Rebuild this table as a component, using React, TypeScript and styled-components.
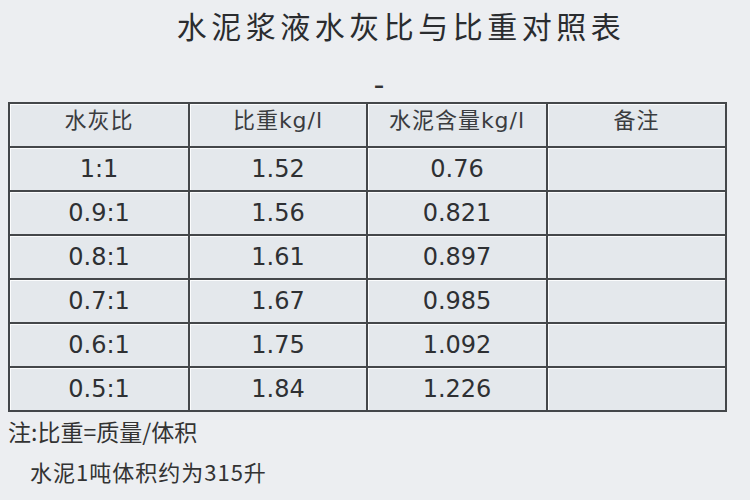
import styled, { createGlobalStyle } from 'styled-components';

const GlobalStyle = createGlobalStyle`
  body {
    margin: 0;
    background: #eceef1;
    font-family: "DejaVu Sans", "Noto Sans CJK SC", sans-serif;
    color: #2e3033;
  }
`;

const rows = [
  ['1:1', '1.52', '0.76'],
  ['0.9:1', '1.56', '0.821'],
  ['0.8:1', '1.61', '0.897'],
  ['0.7:1', '1.67', '0.985'],
  ['0.6:1', '1.75', '1.092'],
  ['0.5:1', '1.84', '1.226'],
];

const App = (): JSX.Element => (
  <Page>
    <GlobalStyle />
    <Title>水泥浆液水灰比与比重对照表</Title>
    <Dash>–</Dash>
    <Table>
      <colgroup>
        <col style={{ width: 180 }} />
        <col style={{ width: 178 }} />
        <col style={{ width: 180 }} />
        <col style={{ width: 179 }} />
      </colgroup>
      <thead>
        <tr>
          <HeadCell>水灰比</HeadCell>
          <HeadCell>比重kg/l</HeadCell>
          <HeadCell>水泥含量kg/l</HeadCell>
          <HeadCell>备注</HeadCell>
        </tr>
      </thead>
      <tbody>
        {rows.map((r) => (
          <tr key={r[0]}>
            <Cell>{r[0]}</Cell>
            <Cell>{r[1]}</Cell>
            <Cell>{r[2]}</Cell>
            <Cell />
          </tr>
        ))}
      </tbody>
    </Table>
    <Note>注:比重=质量/体积</Note>
    <SubNote>水泥1吨体积约为315升</SubNote>
  </Page>
);

export default App;

const Page = styled.div`
  width: 750px;
  height: 500px;
  padding: 5px 0 0 8px;
  box-sizing: border-box;
  overflow: hidden;
`;

const Title = styled.h1`
  margin: 0;
  width: 720px;
  padding-left: 66px;
  box-sizing: border-box;
  text-align: center;
  font-family: "Noto Sans CJK SC", sans-serif;
  font-weight: 400;
  font-size: 30px;
  letter-spacing: 4.5px;
  line-height: 40px;
  color: #2a2c2f;
`;

const Dash = styled.div`
  width: 720px;
  height: 57px;
  line-height: 80px;
  padding-left: 366px;
  box-sizing: border-box;
  font-size: 20px;
  font-weight: 700;
  color: #333;
`;

const Table = styled.table`
  border-collapse: collapse;
  table-layout: fixed;
  width: 719px;
  border: 2px solid #44474a;
`;

const Cell = styled.td`
  height: 42px;
  padding: 0;
  border: 2px solid #44474a;
  background: #e4e8ec;
  box-shadow: inset 1px 1px 0 #fbfcfd;
  text-align: center;
  vertical-align: middle;
  font-size: 24px;
  color: #2e3033;
`;

const HeadCell = styled(Cell).attrs({ as: 'th' })`
  height: 40px;
  font-weight: 400;
  font-size: 22px;
  letter-spacing: 1px;
  line-height: 30px;
  vertical-align: top;
  padding-top: 2px;
  color: #3a3c3f;
`;

const Note = styled.div`
  margin-top: 3px;
  font-family: "Noto Sans CJK SC", sans-serif;
  font-size: 23px;
  line-height: 32px;
  color: #333;
`;

const SubNote = styled.div`
  margin-top: 9px;
  padding-left: 22px;
  font-family: "Noto Sans CJK SC", sans-serif;
  font-size: 22px;
  letter-spacing: 1px;
  line-height: 30px;
  color: #333;
`;
